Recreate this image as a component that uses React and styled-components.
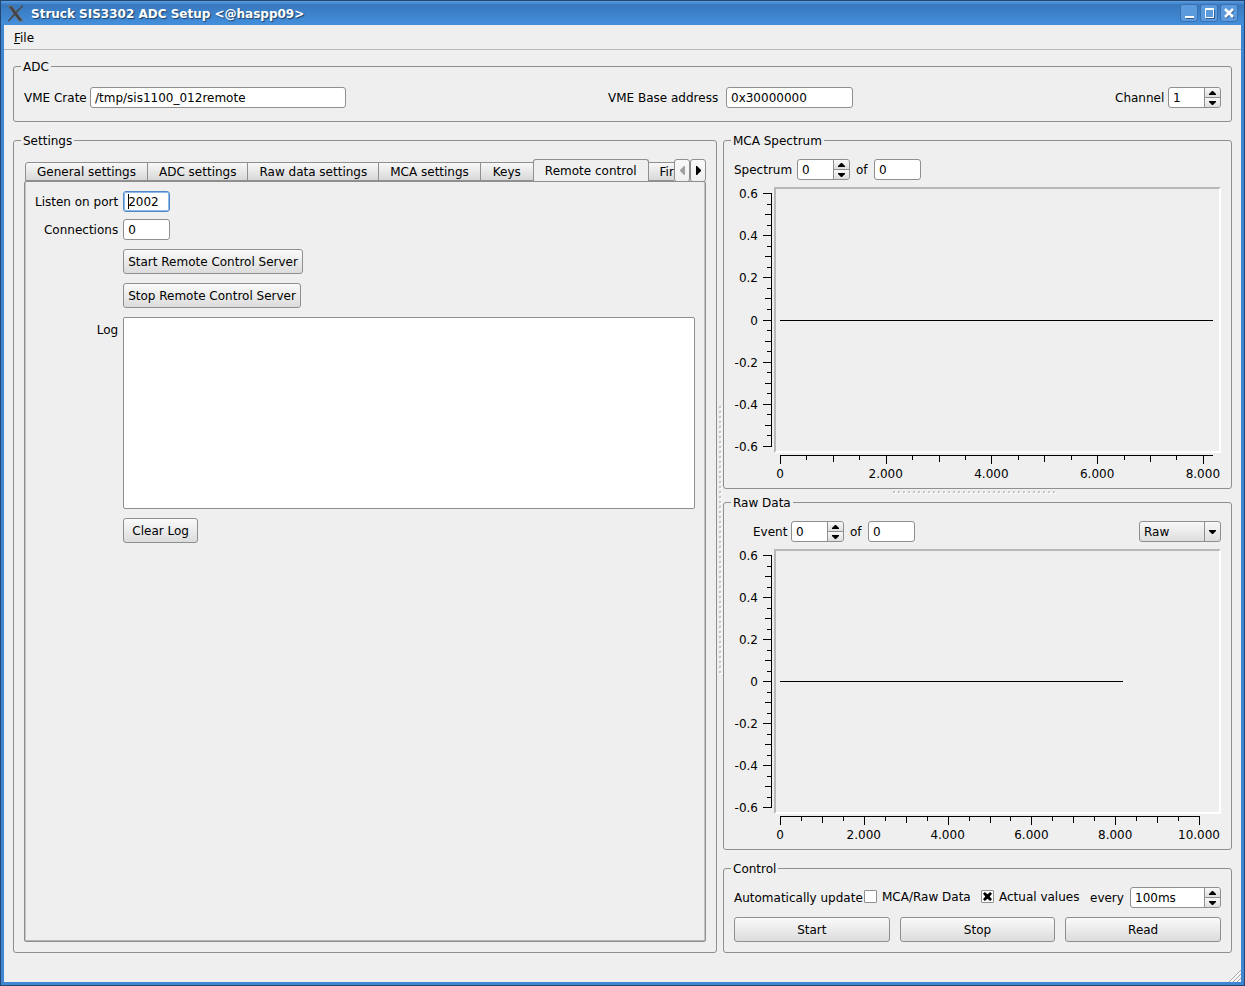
import React, { useState } from "react";
import styled, { createGlobalStyle } from "styled-components";

const settingsTabs = [
  "General settings",
  "ADC settings",
  "Raw data settings",
  "MCA settings",
  "Keys",
  "Remote control",
  "Firmware",
];

const yLabels = ["0.6", "0.4", "0.2", "0", "-0.2", "-0.4", "-0.6"];

const formatTick = (value) =>
  value === 0 ? "0" : `${value / 1000}.000`;

const YAxis = () => {
  const ticks = [];
  for (let i = 0; i <= 24; i++) {
    // major every 0.2, medium every 0.1, minor every 0.05
    const size = i % 4 === 0 ? 8 : i % 2 === 0 ? 6 : 4;
    ticks.push({ pos: `${(i / 24) * 100}%`, size });
  }

  return (
    <YAxisBox>
      <AxisSvg>
        <rect x="37" y="0" width="1" height="100%" />
        {ticks.map(({ pos, size }) => (
          <rect key={pos} x={37 - size} y={pos} width={size + 1} height="1" />
        ))}
        {yLabels.map((label, i) => (
          <text key={label} x="24" y={`${(i / 6) * 100}%`} dy="5" textAnchor="end">
            {label}
          </text>
        ))}
      </AxisSvg>
    </YAxisBox>
  );
};

const XAxis = ({ max, inset }) => {
  const ticks = [];
  for (let value = 0; value <= max; value += 500) {
    const size = value % 2000 === 0 ? 8 : value % 1000 === 0 ? 6 : 4;
    ticks.push({ value, size, pos: `${(value / max) * 100}%` });
  }

  return (
    <XAxisBox $inset={inset}>
      <AxisSvg>
        <rect x="0" y="0" width="100%" height="1" />
        {ticks.map(({ value, pos, size }) => (
          <rect key={value} x={pos} y="0" width="1" height={size + 1} />
        ))}
        {ticks
          .filter(({ value }) => value % 2000 === 0)
          .map(({ value, pos }) => (
            <text key={value} x={pos} y="23" textAnchor="middle">
              {formatTick(value)}
            </text>
          ))}
      </AxisSvg>
    </XAxisBox>
  );
};

const Plot = ({ max, inset, samples }) => (
  <PlotGrid>
    <YAxis />
    <Canvas $inset={inset}>
      <AxisSvg>
        <rect x="0" y="50%" width={`${(samples / max) * 100}%`} height="1" />
      </AxisSvg>
    </Canvas>
    <XAxis max={max} inset={inset} />
  </PlotGrid>
);

const SpinBox = ({ id, value, width }) => (
  <Spin $width={width}>
    <SpinInput id={id} defaultValue={value} />
    <SpinButtons>
      <SpinButton aria-label="Step up">
        <svg width="7" height="4" viewBox="0 0 7 4">
          <path d="M3 0h1l3 3v1H0V3z" />
        </svg>
      </SpinButton>
      <SpinButton aria-label="Step down">
        <svg width="7" height="4" viewBox="0 0 7 4">
          <path d="M3 4h1l3-3V0H0v1z" />
        </svg>
      </SpinButton>
    </SpinButtons>
  </Spin>
);

const TitleBar = () => (
  <Title>
    <svg width="17" height="17" viewBox="0 0 17 17">
      <path d="M1 1h4l11 15h-4z" fill="#3f4347" stroke="#6c7075" strokeWidth="1" />
      <path d="M15 1h1L9.500 8l-1-1zM7 9l1 1-6 6H1z" fill="#4a4e53" stroke="#4a4e53" />
    </svg>
    <TitleText>Struck SIS3302 ADC Setup &lt;@haspp09&gt;</TitleText>
    <TitleButton aria-label="Minimize">
      <svg width="12" height="12" viewBox="0 0 12 12">
        <path d="M3 11.500h8" stroke="#2a5c96" />
        <path d="M2 10h9" stroke="#fff" strokeWidth="2" />
      </svg>
    </TitleButton>
    <TitleButton aria-label="Maximize">
      <svg width="12" height="12" viewBox="0 0 12 12">
        <path d="M11.500 3v8.500H3" fill="none" stroke="#2a5c96" />
        <path d="M2.500 2.500h8v8h-8zM2 1.500h9" fill="none" stroke="#fff" />
      </svg>
    </TitleButton>
    <TitleButton aria-label="Close">
      <svg width="12" height="12" viewBox="0 0 12 12">
        <path d="M3 3l8 8M11 3l-8 8" stroke="#2a5c96" strokeWidth="2" />
        <path d="M2 2l8 8M10 2l-8 8" stroke="#fff" strokeWidth="2.500" />
      </svg>
    </TitleButton>
  </Title>
);

const RemoteControl = () => (
  <Form>
    <FormLabel htmlFor="port">Listen on port</FormLabel>
    <LineEdit id="port" $width={47} $focused defaultValue="2002" />
    <FormLabel htmlFor="connections">Connections</FormLabel>
    <LineEdit id="connections" $width={47} defaultValue="0" readOnly />
    <PushButton>Start Remote Control Server</PushButton>
    <PushButton>Stop Remote Control Server</PushButton>
    <LogLabel htmlFor="log">Log</LogLabel>
    <LogView id="log" readOnly />
    <PushButton>Clear Log</PushButton>
  </Form>
);

const Settings = () => {
  const [current, setCurrent] = useState("Remote control");

  return (
    <GroupBox>
      <legend>Settings</legend>
      <TabRow>
        <TabList role="tablist">
          {settingsTabs.map((tab) => (
            <Tab
              key={tab}
              role="tab"
              aria-selected={tab === current}
              $selected={tab === current}
              onClick={() => setCurrent(tab)}
            >
              {tab}
            </Tab>
          ))}
        </TabList>
        <TabScroll aria-label="Scroll left" disabled>
          <svg width="5" height="9" viewBox="0 0 5 9">
            <path d="M5 0v9H4L0 5V4l4-4z" />
          </svg>
        </TabScroll>
        <TabScroll aria-label="Scroll right">
          <svg width="5" height="9" viewBox="0 0 5 9">
            <path d="M0 0v9h1l4-4V4L1 0z" />
          </svg>
        </TabScroll>
      </TabRow>
      <TabPane>{current === "Remote control" && <RemoteControl />}</TabPane>
    </GroupBox>
  );
};

const App = () => {
  const [updateData, setUpdateData] = useState(false);
  const [updateValues, setUpdateValues] = useState(true);

  return (
    <>
      <GlobalStyle />
      <Frame>
        <TitleBar />
        <Client>
          <MenuBar>
            <MenuItem>
              <u>F</u>ile
            </MenuItem>
          </MenuBar>
          <Content>
            <AdcGroup>
              <legend>ADC</legend>
              <AdcRow>
                <Field>
                  <Label htmlFor="crate" $width={60}>VME Crate</Label>
                  <LineEdit id="crate" $width={256} defaultValue="/tmp/sis1100_012remote" />
                </Field>
                <Field>
                  <Label htmlFor="base" $width={112}>VME Base address</Label>
                  <LineEdit id="base" $width={127} defaultValue="0x30000000" />
                </Field>
                <Field>
                  <Label htmlFor="channel" $width={47}>Channel</Label>
                  <SpinBox id="channel" value="1" width={53} />
                </Field>
              </AdcRow>
            </AdcGroup>
            <Splitter>
              <Settings />
              <VerticalHandle />
              <RightColumn>
                <GroupBox>
                  <legend>MCA Spectrum</legend>
                  <PlotToolbar>
                    <Label htmlFor="spectrum" $width={57}>Spectrum</Label>
                    <SpinBox id="spectrum" value="0" width={53} />
                    <Label htmlFor="spectra" $width={12}>of</Label>
                    <LineEdit id="spectra" $width={47} defaultValue="0" readOnly />
                  </PlotToolbar>
                  <Plot max={8192} inset={8} samples={8192} />
                </GroupBox>
                <HorizontalHandle />
                <GroupBox>
                  <legend>Raw Data</legend>
                  <PlotToolbar $indent>
                    <Label htmlFor="event" $width={32}>Event</Label>
                    <SpinBox id="event" value="0" width={53} />
                    <Label htmlFor="events" $width={12}>of</Label>
                    <LineEdit id="events" $width={47} defaultValue="0" readOnly />
                    <Combo>
                      <select aria-label="Data type">
                        <option>Raw</option>
                        <option>Energy</option>
                      </select>
                      <svg width="7" height="4" viewBox="0 0 7 4">
                        <path d="M3 4h1l3-3V0H0v1z" />
                      </svg>
                    </Combo>
                  </PlotToolbar>
                  <Plot max={10000} inset={22} samples={8192} />
                </GroupBox>
                <ControlGroup>
                  <legend>Control</legend>
                  <ControlRow>
                    <Label as="span" $width={125}>Automatically update</Label>
                    <CheckLabel $width={103}>
                      <CheckBox
                        type="checkbox"
                        checked={updateData}
                        onChange={() => setUpdateData(!updateData)}
                      />
                      MCA/Raw Data
                    </CheckLabel>
                    <CheckLabel $width={97}>
                      <CheckBox
                        type="checkbox"
                        checked={updateValues}
                        onChange={() => setUpdateValues(!updateValues)}
                      />
                      Actual values
                    </CheckLabel>
                    <Every>
                      <Label htmlFor="every" $width={34}>every</Label>
                      <SpinBox id="every" value="100ms" width={91} />
                    </Every>
                  </ControlRow>
                  <ButtonRow>
                    <PushButton>Start</PushButton>
                    <PushButton>Stop</PushButton>
                    <PushButton>Read</PushButton>
                  </ButtonRow>
                </ControlGroup>
              </RightColumn>
            </Splitter>
          </Content>
          <SizeGrip width="12" height="12" viewBox="0 0 12 12">
            <path d="M0 12L12 0M4 12l8-8M8 12l4-4" stroke="#a8a8a8" />
            <path d="M1.500 12L12 1.500M5.500 12L12 5.500M9.500 12L12 9.500" stroke="#fff" />
          </SizeGrip>
        </Client>
      </Frame>
    </>
  );
};

const GlobalStyle = createGlobalStyle`
  *, *::before, *::after {
    box-sizing: border-box;
  }
  body {
    margin: 0;
  }
  body, button, input, select, textarea {
    color: #000;
    font-family: "DejaVu Sans", Verdana, sans-serif;
    font-size: 12px;
    line-height: 15px;
  }
  button, input, select, textarea {
    margin: 0;
    outline: none;
  }
`;

const Frame = styled.div`
  background: #3f87d3;
  border: 1px solid #24476f;
  display: flex;
  flex-direction: column;
  min-height: 100vh;
  padding: 0 3px 3px;
`;

const Title = styled.header`
  align-items: center;
  background: linear-gradient(#5b9ee6, #3778bd 4px, #448fdc);
  display: flex;
  gap: 2px;
  height: 24px;
  margin: 0 -3px;
  padding: 0 6px;
`;

const TitleText = styled.h1`
  color: #fff;
  flex: 1;
  font-size: 12px;
  font-weight: bold;
  line-height: 15px;
  margin: 0 0 0 5px;
  padding-top: 2px;
  text-shadow: 1px 1px 1px #1c3f68;
`;

const TitleButton = styled.button`
  align-items: center;
  background: #5c9ade;
  border: 1px solid #3a70ae;
  border-radius: 3px;
  display: flex;
  height: 18px;
  justify-content: center;
  padding: 0;
  width: 18px;
`;

const Client = styled.main`
  background: #efefef;
  display: flex;
  flex: 1;
  flex-direction: column;
  position: relative;
`;

const MenuBar = styled.nav`
  border-bottom: 1px solid #b8b8b8;
  display: flex;
  height: 25px;
`;

const MenuItem = styled.button`
  background: none;
  border: 0;
  padding: 2px 10px 0;
`;

const Content = styled.div`
  display: flex;
  flex: 1;
  flex-direction: column;
  gap: 11px;
  padding: 9px 9px 29px;
`;

const GroupBox = styled.fieldset`
  border: 1px solid #8f8f8f;
  border-radius: 3px;
  display: flex;
  flex-direction: column;
  margin: 0;
  min-width: 0;
  padding: 11px 10px 10px;

  legend {
    line-height: 13px;
    margin-left: -3px;
    padding: 2px 2px 0;
  }
`;

const AdcGroup = styled(GroupBox)`
  padding: 13px 10px;
`;

const ControlGroup = styled(GroupBox)`
  gap: 9px;
  margin-top: 11px;
`;

const AdcRow = styled.div`
  display: flex;
  justify-content: space-between;
`;

const Field = styled.div`
  align-items: center;
  display: flex;
  gap: 6px;
`;

const Label = styled.label`
  flex: none;
  padding-top: 2px;
  white-space: nowrap;
  width: ${({ $width }) => $width}px;
`;

const LineEdit = styled.input`
  background: #fff;
  border: 1px solid #8f8f8f;
  border-radius: 3px;
  height: 21px;
  padding: 0 4px;
  width: ${({ $width }) => $width}px;
  ${({ $focused }) =>
    $focused &&
    `
    background: linear-gradient(#000, #000) 4px 2px / 1px 15px no-repeat #fff;
    border-color: #4f88c8;
    box-shadow: inset 0 0 0 1px #8db9ea;
  `}
`;

const Spin = styled.div`
  background: #fff;
  border: 1px solid #8f8f8f;
  border-radius: 3px;
  display: flex;
  height: 21px;
  overflow: hidden;
  width: ${({ $width }) => $width}px;
`;

const SpinInput = styled.input`
  background: none;
  border: 0;
  flex: 1;
  min-width: 0;
  padding: 2px 4px 0;
`;

const SpinButtons = styled.div`
  background: #8f8f8f;
  border-left: 1px solid #8f8f8f;
  display: grid;
  gap: 1px;
  width: 16px;
`;

const SpinButton = styled.button`
  align-items: center;
  background: linear-gradient(#f8f8f8, #dedede);
  border: 0;
  display: flex;
  justify-content: center;
  padding: 0;
`;

const PushButton = styled.button`
  background: linear-gradient(#fafafa, #dcdcdc);
  border: 1px solid #8f8f8f;
  border-radius: 3px;
  height: 25px;
  min-width: 75px;
  padding: 2px 4px 0;
`;

const Splitter = styled.div`
  display: grid;
  flex: 1;
  grid-template-columns: 704fr 6px 509fr;
`;

const RightColumn = styled.div`
  display: grid;
  grid-template-rows: minmax(0, 356fr) 6px minmax(0, 355fr) auto;
  min-width: 0;
`;

// each handle is a dotted line, grey dots over white ones
const VerticalHandle = styled.div`
  align-self: center;
  background:
    repeating-linear-gradient(#c4c4c4 0 2px, transparent 2px 5px) 2px 0 / 2px 267px no-repeat,
    repeating-linear-gradient(#fff 0 2px, transparent 2px 5px) 3px 1px / 2px 267px no-repeat;
  height: 268px;
  margin-bottom: 6px;
`;

const HorizontalHandle = styled.div`
  background:
    repeating-linear-gradient(90deg, #c4c4c4 0 2px, transparent 2px 5px) 0 2px / 162px 2px no-repeat,
    repeating-linear-gradient(90deg, #fff 0 2px, transparent 2px 5px) 1px 3px / 162px 2px no-repeat;
  height: 6px;
  justify-self: center;
  margin-right: 6px;
  width: 163px;
`;

const TabRow = styled.div`
  align-items: flex-start;
  display: flex;
  margin-bottom: -1px;
  position: relative;
  z-index: 1;
`;

const TabList = styled.div`
  align-items: flex-end;
  display: flex;
  flex: 1;
  height: 22px;
  overflow: hidden;
  padding-left: 1px;
`;

const Tab = styled.button`
  background: ${({ $selected }) =>
    $selected ? "#efefef" : "linear-gradient(#f8f8f8, #d8d8d8)"};
  border: 1px solid #8f8f8f;
  border-bottom-width: ${({ $selected }) => ($selected ? 0 : 1)}px;
  border-radius: ${({ $selected }) => ($selected ? "3px 3px 0 0" : "0")};
  flex: none;
  height: ${({ $selected }) => ($selected ? 22 : 19)}px;
  min-width: 54px;
  padding: 2px 11px 0;
  white-space: nowrap;

  & + & {
    margin-left: -1px;
  }
  &:first-child {
    border-top-left-radius: 3px;
  }
`;

const TabScroll = styled.button`
  align-items: center;
  background: linear-gradient(#fafafa, #efefef);
  border: 1px solid #8f8f8f;
  border-radius: 3px;
  display: flex;
  height: 23px;
  justify-content: center;
  padding: 0;
  width: 16px;

  &:disabled {
    fill: #a0a0a0;
  }
`;

const TabPane = styled.div`
  border: 1px solid #8f8f8f;
  border-radius: 2px;
  box-shadow: inset 1px 0 #c4c4c4, inset 0 -1px #b4b4b4, inset -1px 0 #c4c4c4;
  flex: 1;
  padding: 9px 10px;
`;

const Form = styled.div`
  display: grid;
  gap: 7px 5px;
  grid-template-columns: auto minmax(0, 1fr);
  justify-items: start;

  ${PushButton} {
    grid-column: 2;
    margin-top: 2px;
  }
`;

const FormLabel = styled.label`
  align-self: center;
  justify-self: end;
  padding-top: 2px;
`;

const LogLabel = styled(FormLabel)`
  align-self: start;
  padding-top: 8px;
`;

const LogView = styled.textarea`
  background: #fff;
  border: 1px solid #8f8f8f;
  border-radius: 2px;
  display: block;
  height: 192px;
  margin-top: 2px;
  padding: 4px;
  resize: none;
  width: 100%;
`;

const PlotToolbar = styled.div`
  align-items: center;
  display: flex;
  gap: 6px;
  padding-left: ${({ $indent }) => ($indent ? 19 : 0)}px;
`;

const Combo = styled.div`
  margin-left: auto;
  position: relative;

  select {
    appearance: none;
    background: linear-gradient(#8f8f8f, #8f8f8f) 64px 0 / 1px 100% no-repeat,
      linear-gradient(#f8f8f8, #dedede);
    border: 1px solid #8f8f8f;
    border-radius: 3px;
    display: block;
    height: 21px;
    padding: 2px 18px 0 4px;
    width: 82px;
  }
  svg {
    pointer-events: none;
    position: absolute;
    right: 5px;
    top: 9px;
  }
`;

const PlotGrid = styled.div`
  display: grid;
  flex: 1;
  grid-template-columns: 40px minmax(0, 1fr);
  grid-template-rows: minmax(0, 1fr) 25px;
  margin-top: 7px;
  min-height: 160px;
`;

const AxisSvg = styled.svg`
  display: block;
  height: 100%;
  overflow: visible;
  shape-rendering: crispEdges;
  width: 100%;
`;

const YAxisBox = styled.div`
  padding: 6px 0 7px;
`;

const Canvas = styled.div`
  border: 2px solid;
  border-color: #b8b8b8 #fff #fff #b8b8b8;
  padding: 4px ${({ $inset }) => $inset - 2}px 5px 4px;
`;

const XAxisBox = styled.div`
  grid-column: 2;
  padding: 2px ${({ $inset }) => $inset}px 0 6px;
`;

const ControlRow = styled.div`
  align-items: center;
  display: flex;
  height: 21px;
`;

const CheckLabel = styled.label`
  align-items: center;
  display: flex;
  flex: none;
  gap: 5px;
  margin-left: 5px;
  white-space: nowrap;
  width: ${({ $width }) => $width}px;

  & + & {
    margin-left: 14px;
  }
`;

const CheckBox = styled.input`
  appearance: none;
  background: #fff;
  border: 1px solid #8f8f8f;
  border-radius: 1px;
  display: grid;
  flex: none;
  height: 13px;
  margin-bottom: 2px;
  place-items: center;
  width: 13px;

  &:checked::before {
    background: #000;
    clip-path: polygon(
      0 20%, 20% 0, 50% 25%, 80% 0, 100% 20%, 75% 50%,
      100% 80%, 80% 100%, 50% 75%, 20% 100%, 0 80%, 25% 50%
    );
    content: "";
    height: 9px;
    width: 9px;
  }
`;

const Every = styled(Field)`
  margin-left: auto;
`;

const ButtonRow = styled.div`
  display: grid;
  gap: 10px;
  grid-template-columns: repeat(3, 1fr);
`;

const SizeGrip = styled.svg`
  bottom: 0;
  position: absolute;
  right: 0;
`;

export default App;
